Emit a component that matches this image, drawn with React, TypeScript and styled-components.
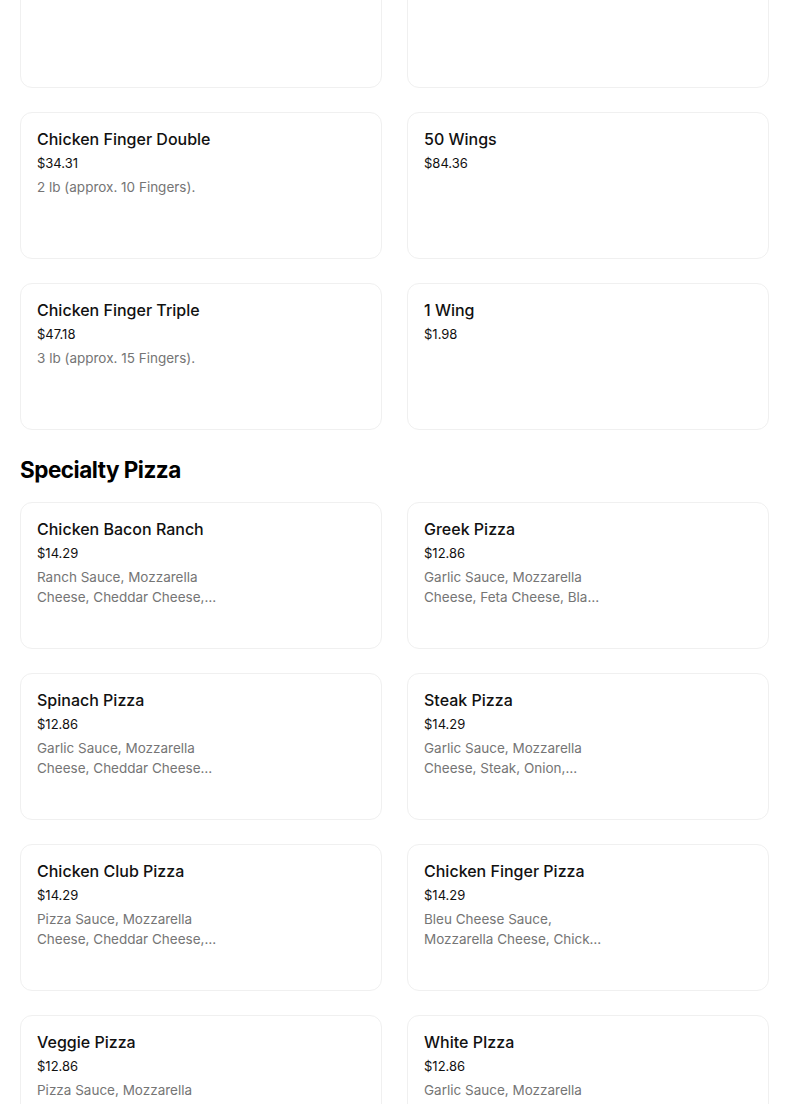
import styled, { createGlobalStyle } from "styled-components";

const GlobalStyle = createGlobalStyle`
  body {
    margin: 0;
    background: #ffffff;
    font-family: Inter, "Noto Sans", sans-serif;
    color: #000000;
    overflow: hidden;
  }
`;

const Page = styled.div`
  width: 749px;
  padding-left: 20px;
  margin-top: -59px;
`;

const Section = styled.section`
  display: flex;
  flex-direction: column;
`;

const SectionTitle = styled.h2`
  margin: 24px 0 16px;
  font-size: 22.5px;
  line-height: 32px;
  font-weight: 700;
  letter-spacing: -0.5px;
`;

const Grid = styled.div`
  display: grid;
  grid-template-columns: 1fr 1fr;
  column-gap: 25px;
  row-gap: 24px;
`;

const Card = styled.div`
  height: 147px;
  box-sizing: border-box;
  border: 1px solid #f0f0f0;
  border-radius: 12px;
  padding: 15px 16px 16px;
  display: flex;
  flex-direction: column;
`;

const ItemName = styled.div`
  font-size: 16px;
  line-height: 22px;
  font-weight: 500;
  color: #111111;
`;

const Price = styled.div`
  margin-top: 3px;
  font-size: 13px;
  line-height: 20px;
  color: #111111;
`;

const Description = styled.div`
  margin-top: 4px;
  width: 182px;
  font-size: 13.5px;
  line-height: 20px;
  color: #757575;
  display: -webkit-box;
  -webkit-line-clamp: 2;
  -webkit-box-orient: vertical;
  overflow: hidden;
`;

interface Item {
  name?: string;
  price?: string;
  desc?: string;
}

const sides: Item[] = [
  {},
  {},
  { name: "Chicken Finger Double", price: "$34.31", desc: "2 lb (approx. 10 Fingers)." },
  { name: "50 Wings", price: "$84.36" },
  { name: "Chicken Finger Triple", price: "$47.18", desc: "3 lb (approx. 15 Fingers)." },
  { name: "1 Wing", price: "$1.98" },
];

const pizzas: Item[] = [
  {
    name: "Chicken Bacon Ranch",
    price: "$14.29",
    desc: "Ranch Sauce, Mozzarella Cheese, Cheddar Cheese, Chicken, Bacon, Onion",
  },
  {
    name: "Greek Pizza",
    price: "$12.86",
    desc: "Garlic Sauce, Mozzarella Cheese, Feta Cheese, Black Olives, Tomato, Onion",
  },
  {
    name: "Spinach Pizza",
    price: "$12.86",
    desc: "Garlic Sauce, Mozzarella Cheese, Cheddar Cheese Spinach, Tomato",
  },
  {
    name: "Steak Pizza",
    price: "$14.29",
    desc: "Garlic Sauce, Mozzarella Cheese, Steak, Onion, Green Peppers",
  },
  {
    name: "Chicken Club Pizza",
    price: "$14.29",
    desc: "Pizza Sauce, Mozzarella Cheese, Cheddar Cheese, Chicken, Bacon, Tomato",
  },
  {
    name: "Chicken Finger Pizza",
    price: "$14.29",
    desc: "Bleu Cheese Sauce, Mozzarella Cheese, Chicken Fingers, Hot Sauce",
  },
  {
    name: "Veggie Pizza",
    price: "$12.86",
    desc: "Pizza Sauce, Mozzarella Cheese, Peppers, Onion, Mushrooms, Olives",
  },
  {
    name: "White PIzza",
    price: "$12.86",
    desc: "Garlic Sauce, Mozzarella Cheese, Ricotta, Tomato",
  },
];

function MenuCard({ item }: { item: Item }) {
  return (
    <Card>
      {item.name && <ItemName>{item.name}</ItemName>}
      {item.price && <Price>{item.price}</Price>}
      {item.desc && <Description>{item.desc}</Description>}
    </Card>
  );
}

export default function App() {
  return (
    <>
      <GlobalStyle />
      <Page>
        <Section>
          <Grid>
            {sides.map((item, i) => (
              <MenuCard key={i} item={item} />
            ))}
          </Grid>
        </Section>
        <Section>
          <SectionTitle>Specialty Pizza</SectionTitle>
          <Grid>
            {pizzas.map((item, i) => (
              <MenuCard key={i} item={item} />
            ))}
          </Grid>
        </Section>
      </Page>
    </>
  );
}
